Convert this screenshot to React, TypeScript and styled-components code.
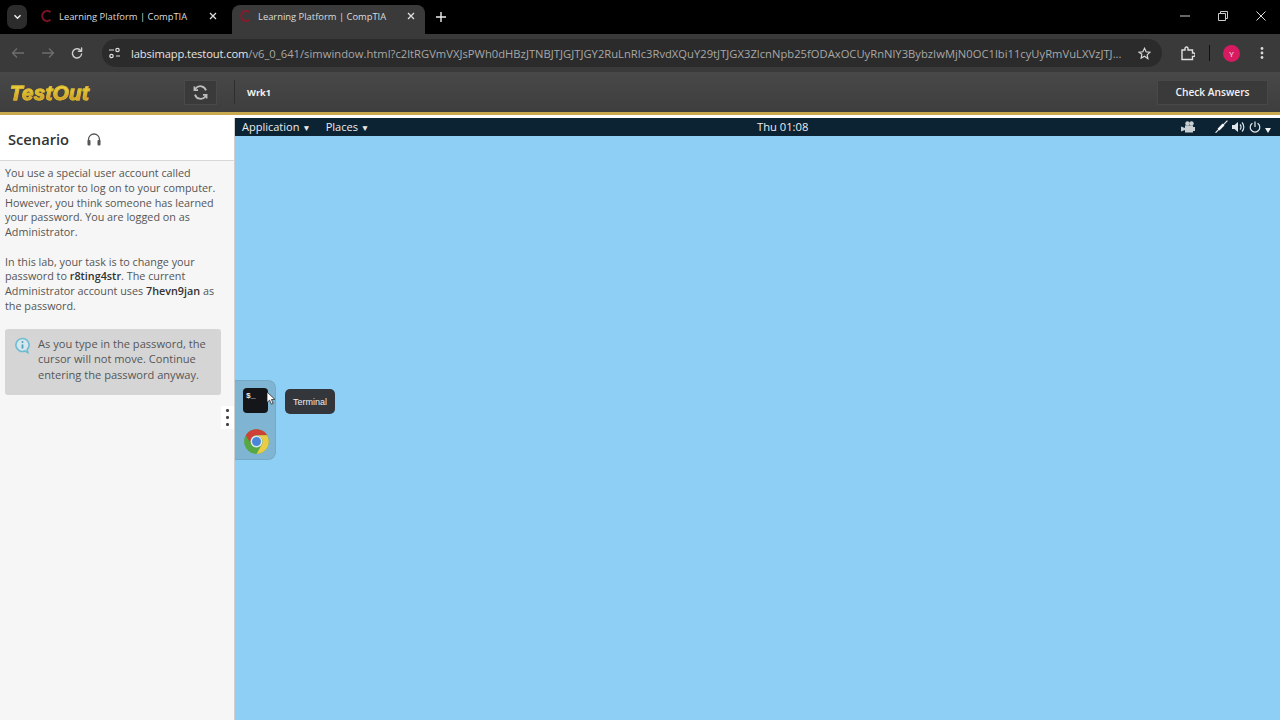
import React from "react";
import styled, { createGlobalStyle } from "styled-components";

const Global = createGlobalStyle`
  html, body { margin: 0; padding: 0; width: 1280px; height: 720px; overflow: hidden; background: #fff; }
  * { box-sizing: border-box; }
`;
const Page = styled.div`
  width: 1280px; height: 720px; display: flex; flex-direction: column; overflow: hidden;
  font-family: "Open Sans", sans-serif;
`;
const TabStrip = styled.div`
  height: 34px; background: #000; display: flex; align-items: flex-start; padding: 5px 0 0 7px; flex: none; color: #e6e6e6;
`;
const TabMenu = styled.div`
  width: 20px; height: 24px; border-radius: 7px; background: #2c2c2c; display: flex; align-items: center; justify-content: center; flex: none;
`;
const Tab = styled.div<{ $active?: boolean }>`
  width: 193px; height: 29px; display: flex; align-items: center; flex: none;
  margin-left: 6px;
  padding: 0 ${(p) => (p.$active ? "10px" : "9px")} 7px 7px;
  border-radius: 8px 8px 0 0;
  background: ${(p) => (p.$active ? "#3a3a3a" : "transparent")};
  font: 9.4px "Open Sans", sans-serif; color: #dcdcdc;
`;
const TabTitle = styled.span`
  margin-left: 5px; flex: 1; white-space: nowrap;
`;
const NewTab = styled.div`
  margin: 2px 0 0 7px; width: 18px; height: 20px; display: flex; align-items: center; justify-content: center;
`;
const WindowControls = styled.div`
  margin-left: auto; display: flex; align-items: center; gap: 28px; padding: 6px 14px 0 0;
`;
const Toolbar = styled.div`
  height: 38px; flex: none; background: #3a3a3a; display: flex; align-items: center; padding: 0 10px 0 11px;
`;
const NavIcon = styled.div`
  width: 30px; height: 24px; display: flex; align-items: center; justify-content: flex-start; flex: none;
`;
const Omnibox = styled.div`
  width: 1060px; height: 28px; margin-left: 1px; border-radius: 14px; background: #2b2b2b; display: flex; align-items: center; padding: 0 11px 0 6px; flex: none;
`;
const Url = styled.div`
  margin-left: 10px; flex: 1; min-width: 0; white-space: nowrap; overflow: hidden; text-overflow: ellipsis; font: 11.2px "Open Sans", sans-serif; letter-spacing: 0.025px; color: #a8a8a8;
  b { font-weight: 400; color: #e4e4e4; letter-spacing: -0.12px; }
`;
const ToolRight = styled.div`
  display: flex; align-items: center; margin-left: 18px; flex: none;
`;
const Avatar = styled.div`
  width: 17px; height: 17px; border-radius: 50%; background: #d81b60; color: #fff; font-size: 8px; display: flex; align-items: center; justify-content: center; margin-left: 28px;
`;
const Divider = styled.div`
  width: 1px; height: 16px; background: #111; margin-left: 14px; margin-right: -15px;
`;
const AppBar = styled.div`
  height: 40px; flex: none; background: linear-gradient(#484848, #3e3e3e); display: flex; align-items: center; padding: 0 12px 0 10px;
`;
const Logo = styled.div`
  width: 174px; padding-top: 2px; font: italic 700 20.5px "Liberation Sans", sans-serif; letter-spacing: 0.35px; flex: none;
  background: linear-gradient(#efd83f 30%, #cf9f2a 75%);
  -webkit-background-clip: text; background-clip: text; color: transparent;
  -webkit-text-stroke: 0.9px #d9b52f;
`;
const RefreshBtn = styled.div`
  width: 33px; height: 25px; background: #3a3a3a; border: 1px solid #4a4a4a; display: flex; align-items: center; justify-content: center; flex: none;
`;
const BarSep = styled.div`
  width: 1px; height: 24px; background: #2e2e2e; margin: 0 12px 0 17px;
`;
const Wrk = styled.div`
  font: 700 9.2px "Open Sans", sans-serif; color: #f2f2f2;
`;
const CheckBtn = styled.div`
  margin-left: auto; width: 111px; height: 25px; background: #3a3a3a; border: 1px solid #484848; display: flex; align-items: center; justify-content: center;
  font: 600 10.2px "Open Sans", sans-serif; color: #f2f2f2;
`;
const GoldLine = styled.div`
  height: 3px; flex: none; background: #c9a94f;
`;
const WhiteLine = styled.div`
  height: 3px; flex: none; background: #fff;
`;
const Body = styled.div`
  flex: 1; display: flex; min-height: 0;
`;
const Side = styled.div`
  width: 235px; flex: none; background: #f6f6f6; border-right: 1px solid #cfcfcf; position: relative; display: flex; flex-direction: column;
`;
const SideHead = styled.div`
  height: 43px; background: #fff; border-bottom: 1px solid #d8d8d8; display: flex; align-items: center; padding: 0 0 0 8px; gap: 16px; flex: none;
`;
const SideTitle = styled.div`
  font: 600 14.7px "Open Sans", sans-serif; color: #333;
`;
const SideText = styled.div`
  padding: 5.3px 13px 0 5px; font: 10.8px/14.7px "Open Sans", sans-serif; color: #555;
  p { margin: 0 0 14.7px; }
  b { font-weight: 600; color: #333; }
`;
const Note = styled.div`
  margin: 0.6px 13px 0 5px; height: 66px; background: #d5d5d5; border-radius: 3px; display: flex; padding: 7.3px 4px 0 9px; gap: 7px;
  font: 11.1px/15.4px "Open Sans", sans-serif; color: #555;
`;
const NoteIcon = styled.div`
  flex: none; width: 17px; padding-top: 1px;
`;
const Handle = styled.div`
  position: absolute; right: 0; top: 288px; width: 13px; height: 23px; background: #fff; display: flex; flex-direction: column; align-items: center; justify-content: center; gap: 4.5px;
  i { width: 2.5px; height: 2.5px; border-radius: 50%; background: #444; display: block; }
`;
const Desktop = styled.div`
  flex: 1; position: relative; background: #8ecff5; display: flex; flex-direction: column;
`;
const TopBar = styled.div`
  height: 18px; flex: none; background: #0c2334; color: #ececec; position: relative; display: flex; align-items: center; padding: 0 9px 1px 7px;
  font: 11px "Open Sans", sans-serif;
`;
const Menu = styled.span`
  margin-right: 15px; white-space: nowrap;
  small { font-size: 8.5px; vertical-align: 0.5px; }
`;
const Clock = styled.div`
  position: absolute; left: 522px; top: 1px; font-size: 11.2px;
`;
const Tray = styled.div`
  margin-left: auto; display: flex; align-items: center;
`;
const Dock = styled.div`
  position: absolute; left: 0; top: 262px; width: 41px; height: 80px; background: #7fb5d2; border-radius: 0 8px 8px 0; border: 1px solid #77a9c6; border-left: 0;
`;
const TermIcon = styled.div`
  position: absolute; left: 8px; top: 7px; width: 25px; height: 25px; background: #15161a; border-radius: 4px; color: #eee;
  font: 700 8px "Liberation Mono", monospace; padding: 3px 0 0 3px;
`;
const ChromeIcon = styled.div`
  position: absolute; left: 8px; top: 47px; width: 27px; height: 27px;
`;
const Cursor = styled.div`
  position: absolute; left: 31px; top: 270px; width: 10px; height: 14px;
`;
const Tip = styled.div`
  position: absolute; left: 50px; top: 271px; width: 50px; height: 25px; background: #33363a; border-radius: 5px; color: #eee; font: 9px "Liberation Sans", sans-serif; display: flex; align-items: center; justify-content: center;
`;

const S = { fill: "none", strokeWidth: 1.4, strokeLinecap: "round" as const, strokeLinejoin: "round" as const };

const Favicon = ({ dim }: { dim?: boolean }) => (
  <svg width="14" height="14" viewBox="0 0 14 14" fill="none" style={{ flex: "none" }}>
    <path d="M10.5 3.2A5 5 0 1 0 10.5 10.8" stroke={dim ? "#7d1226" : "#8a1a2c"} strokeWidth="2" />
  </svg>
);
const X = ({ c = "#e0e0e0", size = 8 }: { c?: string; size?: number }) => (
  <svg width={size} height={size} viewBox="0 0 8 8" style={{ flex: "none" }}><path d="M1 1l6 6M7 1L1 7" stroke={c} strokeWidth="1.3" /></svg>
);

export default function App() {
  return (
    <Page>
      <Global />
      <TabStrip>
        <TabMenu>
          <svg width="9" height="6" viewBox="0 0 9 6"><path d="M1.5 1.2l3 3 3-3" fill="none" stroke="#eee" strokeWidth="1.5" /></svg>
        </TabMenu>
        <Tab>
          <Favicon dim /><TabTitle>Learning Platform | CompTIA</TabTitle><X />
        </Tab>
        <Tab $active>
          <Favicon /><TabTitle>Learning Platform | CompTIA</TabTitle><X />
        </Tab>
        <NewTab>
          <svg width="10" height="10" viewBox="0 0 10 10"><path d="M5 0v10M0 5h10" stroke="#eee" strokeWidth="1.4" /></svg>
        </NewTab>
        <WindowControls>
          <svg width="10" height="10" viewBox="0 0 10 10"><path d="M0 5h10" stroke="#ccc" strokeWidth="1" /></svg>
          <svg width="10" height="10" viewBox="0 0 10 10" fill="none"><path d="M.5 2.5h7v7h-7zM2.5 2.5v-2h7v7h-2" stroke="#ccc" /></svg>
          <svg width="10" height="10" viewBox="0 0 10 10"><path d="M.5.5l9 9M9.5.5l-9 9" stroke="#ddd" /></svg>
        </WindowControls>
      </TabStrip>
      <Toolbar>
        <NavIcon>
          <svg width="14" height="12" viewBox="0 0 14 12"><path d="M13 6H2M6 1.5L1.5 6 6 10.5" fill="none" stroke="#6e6e6e" strokeWidth="1.3" /></svg>
        </NavIcon>
        <NavIcon>
          <svg width="14" height="12" viewBox="0 0 14 12"><path d="M1 6h11M8 1.5L12.5 6 8 10.5" fill="none" stroke="#6e6e6e" strokeWidth="1.3" /></svg>
        </NavIcon>
        <NavIcon>
          <svg width="12" height="12" viewBox="0 0 12 12"><path d="M10 4A4.6 4.6 0 1 0 10.6 7" {...S} stroke="#d0d0d0" /><path d="M10.6 1v3.2H7.4" {...S} stroke="#d0d0d0" /></svg>
        </NavIcon>
        <Omnibox>
          <svg width="13" height="12" viewBox="0 0 13 12" fill="none" stroke="#e0e0e0" strokeWidth="1.2" style={{ flex: "none" }}><path d="M1 3h5M8 9h4" /><circle cx="9.5" cy="3" r="1.7" /><circle cx="3.5" cy="9" r="1.7" /></svg>
          <Url><b>labsimapp.testout.com</b>/v6_0_641/simwindow.html?c2ltRGVmVXJsPWh0dHBzJTNBJTJGJTJGY2RuLnRlc3RvdXQuY29tJTJGX3ZlcnNpb25fODAxOCUyRnNlY3BybzIwMjN0OC1lbi11cyUyRmVuLXVzJTJ...</Url>
          <svg width="13" height="13" viewBox="0 0 24 24" fill="none" stroke="#d8d8d8" strokeWidth="2.2" style={{ marginLeft: 14, flex: "none" }}><path d="M12 2.5l3 6.4 7 .9-5.1 4.8 1.3 6.9L12 17.2l-6.2 3.3 1.3-6.9L2 9.8l7-.9z" /></svg>
        </Omnibox>
        <ToolRight>
          <svg width="15" height="15" viewBox="0 0 15 15" fill="none" stroke="#e0e0e0" strokeWidth="1.4"><path d="M2 4h3V2.500a1.500 1.500 0 0 1 3 0V4h4.500v3h1a1.700 1.700 0 0 1 0 3.400h-1V13.500H2z" /></svg>
          <Divider />
          <Avatar>Y</Avatar>
          <svg width="4" height="14" viewBox="0 0 4 14" fill="#d8d8d8" style={{ marginLeft: 20 }}><circle cx="2" cy="2.5" r="1.4" /><circle cx="2" cy="7" r="1.4" /><circle cx="2" cy="11.5" r="1.4" /></svg>
        </ToolRight>
      </Toolbar>
      <AppBar>
        <Logo>TestOut</Logo>
        <RefreshBtn>
          <svg width="17" height="17" viewBox="0 0 16 16" fill="none" stroke="#bdbdbd" strokeWidth="1.7"><path d="M13.2 6A5.6 5.6 0 0 0 3.4 4.3L2.5 5.5M2.8 10a5.6 5.6 0 0 0 9.800 1.700l.9-1.200" /><path d="M2.300 2.300v3.400h3.400M13.700 13.700v-3.400h-3.400" /></svg>
        </RefreshBtn>
        <BarSep />
        <Wrk>Wrk1</Wrk>
        <CheckBtn>Check Answers</CheckBtn>
      </AppBar>
      <GoldLine />
      <WhiteLine />
      <Body>
        <Side>
          <SideHead>
            <SideTitle>Scenario</SideTitle>
            <svg width="16" height="15" viewBox="0 0 16 15" fill="none" style={{ marginLeft: 1 }}><path d="M2.5 10V7.5a5.500 5.500 0 0 1 11 0V10" stroke="#555" strokeWidth="1.3" /><rect x="1.5" y="8" width="3" height="5.5" rx="1" fill="#555" /><rect x="11.5" y="8" width="3" height="5.5" rx="1" fill="#555" /></svg>
          </SideHead>
          <SideText>
            <p>You use a special user account called Administrator to log on to your computer. However, you think someone has learned your password. You are logged on as Administrator.</p>
            <p>In this lab, your task is to change your password to <b>r8ting4str</b>. The current Administrator account uses <b>7hevn9jan</b> as the password.</p>
          </SideText>
          <Note>
            <NoteIcon>
              <svg width="17" height="17" viewBox="0 0 17 17" fill="none"><path d="M8.5 1.5a6.500 6.500 0 1 0 2.400 12.500l3 1.600-.8-3A6.500 6.500 0 0 0 8.500 1.500z" fill="#d6e6ec" stroke="#6fbcd2" strokeWidth="1.6" /><path d="M8.5 7.5v4" stroke="#4a9fb8" strokeWidth="1.8" /><circle cx="8.5" cy="5" r="1" fill="#4a9fb8" /></svg>
            </NoteIcon>
            <div>As you type in the password, the cursor will not move. Continue entering the password anyway.</div>
          </Note>
          <Handle><i /><i /><i /></Handle>
        </Side>
        <Desktop>
          <TopBar>
            <Menu>Application <small>▼</small></Menu>
            <Menu>Places <small>▼</small></Menu>
            <Clock>Thu 01:08</Clock>
            <Tray>
              <svg width="14" height="12" viewBox="0 0 14 12" fill="#c9d0d4" style={{ marginRight: 20 }}><rect x="4" y="4.5" width="8" height="7" /><path d="M0 5.500l4 1.500v2L0 10.500z" /><rect x="12" y="6" width="2" height="4" /><circle cx="6.5" cy="2.5" r="2.2" /><circle cx="10.5" cy="2.5" r="2.2" /></svg>
              <svg width="13" height="13" viewBox="0 0 13 13" fill="none" style={{ marginRight: 4 }}><path d="M.6 12.700L12.400.6" stroke="#eef1f2" strokeWidth="1.1" /><path d="M3.500 9.700L8.500 4.500" stroke="#f6f6f6" strokeWidth="2.600" /></svg>
              <svg width="13" height="12" viewBox="0 0 13 12" fill="none" style={{ marginRight: 4 }}><path d="M0 4h2.500L6 1v10L2.500 8H0z" fill="#dfe5e8" /><path d="M8 3.500a3.500 3.500 0 0 1 0 5M10 1.500a6.500 6.500 0 0 1 0 9" stroke="#dfe5e8" strokeWidth="1.2" /></svg>
              <svg width="12" height="12" viewBox="0 0 12 12" fill="none" stroke="#e4e9ec" strokeWidth="1.2" style={{ marginRight: 4 }}><path d="M6 .5v5.500M3.400 2.200a4.800 4.800 0 1 0 5.200 0" /></svg>
              <svg width="6" height="5" viewBox="0 0 6 5" style={{ marginTop: 7 }}><path d="M0 0h6L3 5z" fill="#eee" /></svg>
            </Tray>
          </TopBar>
          <Dock>
            <TermIcon>$_</TermIcon>
            <ChromeIcon>
              <svg width="27" height="27" viewBox="0 0 48 48">
                <circle cx="24" cy="24" r="22" fill="#55a844" />
                <path d="M5 13A22 22 0 0 1 43 13H24A11 11 0 0 0 14.5 29.5Z" fill="#cf4038" />
                <path d="M43 13A22 22 0 0 1 24 46L33.5 29.5A11 11 0 0 0 24 13Z" fill="#eccb45" />
                <circle cx="24" cy="24" r="10.5" fill="#dfe8ee" />
                <circle cx="24" cy="24" r="8" fill="#4a86d8" />
              </svg>
            </ChromeIcon>
          </Dock>
          <Cursor>
            <svg width="10" height="14" viewBox="0 0 10 14"><path d="M1 1v10.500l2.600-2.300 1.800 4 1.800-.8-1.800-3.900 3.400-.2z" fill="#fff" stroke="#111" strokeWidth=".7" /></svg>
          </Cursor>
          <Tip>Terminal</Tip>
        </Desktop>
      </Body>
    </Page>
  );
}
